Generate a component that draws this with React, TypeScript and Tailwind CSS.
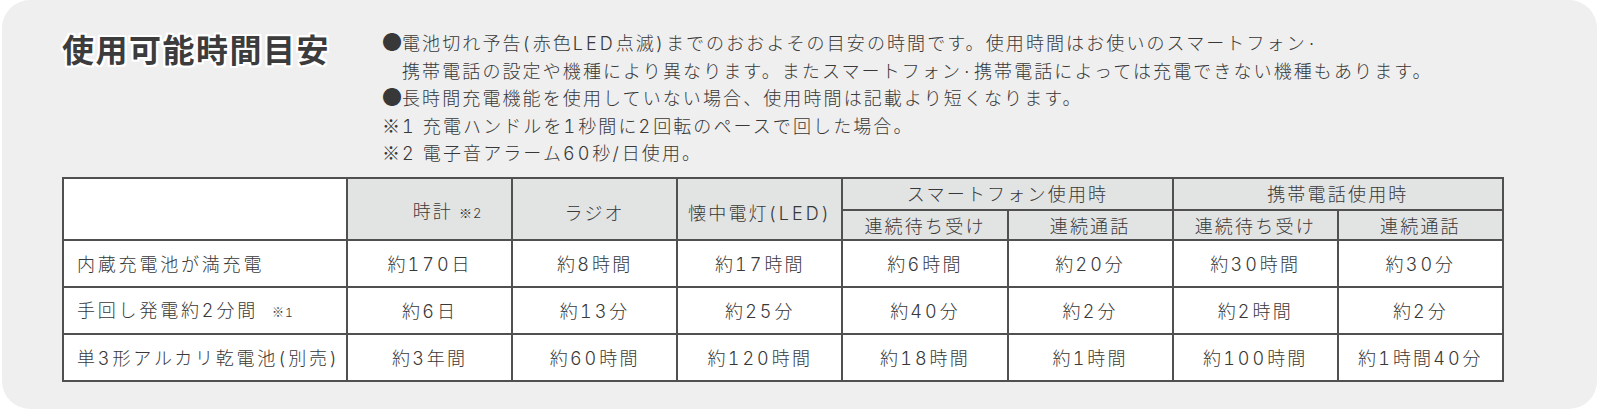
import React from 'react';

const cols = ['時計', 'ラジオ', '懐中電灯(LED)'];

const rows = [
  { label: '内蔵充電池が満充電', values: ['約170日', '約8時間', '約17時間', '約6時間', '約20分', '約30時間', '約30分'] },
  { label: '手回し発電約2分間', note: '※1', values: ['約6日', '約13分', '約25分', '約40分', '約2分', '約2時間', '約2分'] },
  { label: '単3形アルカリ乾電池(別売)', values: ['約3年間', '約60時間', '約120時間', '約18時間', '約1時間', '約100時間', '約1時間40分'] },
];

const cell = 'border-2 border-[#505050] leading-[24px]';

// latin / digit runs get a wider face and extra spacing, like the print original
function T({ s }: { s: string }) {
  const parts = s.split(/([0-9A-Za-z()/]+)/);
  return (
    <>
      {parts.map((p, i) =>
        i % 2 ? (
          <span key={i} className="font-['Inter',sans-serif] font-light tabular-nums leading-none tracking-[3px]">{p}</span>
        ) : (
          p
        )
      )}
    </>
  );
}

function Dot() {
  return <span className="inline-block w-[20px] text-[20px] leading-none tracking-normal">●</span>;
}

export default function App() {
  return (
    <div className="w-[1600px] h-[412px] bg-white pl-[2px] pr-[3px] pb-[3px] font-['Noto_Sans_CJK_JP',sans-serif] font-light text-[#383838]">
      <div className="h-full rounded-[28px] bg-[#efefef] pl-[60px] pt-[29px]">
        <div className="flex">
          <h1 className="w-[320px] mt-[3px] text-[32px] leading-[32px] font-bold tracking-[1.5px] text-[#3c3c3c] [text-shadow:2px_0_0_#fff,-2px_0_0_#fff,0_2px_0_#fff,0_-2px_0_#fff,2px_2px_0_#fff,-2px_-2px_0_#fff,2px_-2px_0_#fff,-2px_2px_0_#fff]">
            使用可能時間目安
          </h1>
          <div className="text-[18px] leading-[27.5px] tracking-[2.1px]">
            <div><Dot /><T s="電池切れ予告(赤色LED点滅)までのおおよその目安の時間です。使用時間はお使いのスマートフォン·" /></div>
            <div className="pl-[20px]">携帯電話の設定や機種により異なります。またスマートフォン·携帯電話によっては充電できない機種もあります。</div>
            <div><Dot />長時間充電機能を使用していない場合、使用時間は記載より短くなります。</div>
            <div>※<T s="1" /> 充電ハンドルを<T s="1" />秒間に<T s="2" />回転のペースで回した場合。</div>
            <div>※<T s="2" /> 電子音アラーム<T s="60" />秒<T s="/" />日使用。</div>
          </div>
        </div>

        <table className="mt-[10px] w-[1442px] table-fixed border-collapse text-[18px] tracking-[2.2px]">
          <colgroup>
            <col className="w-[284px]" />
            <col />
            <col />
            <col />
            <col />
            <col />
            <col />
            <col />
          </colgroup>
          <thead>
            <tr className="h-[32px]">
              <th rowSpan={2} className={`${cell} bg-white`} />
              {cols.map((c, i) => (
                <th key={c} rowSpan={2} className={`${cell} bg-[#e2e3e3] font-light ${i === 0 ? 'pl-[38px] pt-[6px]' : 'pt-[6px]'}`}>
                  <T s={c} />
                  {i === 0 && <span className="ml-[6px] text-[13px] tracking-[1px]">※<T s="2" /></span>}
                </th>
              ))}
              <th colSpan={2} className={`${cell} bg-[#e2e3e3] font-light pb-[2px]`}>スマートフォン使用時</th>
              <th colSpan={2} className={`${cell} bg-[#e2e3e3] font-light pb-[2px]`}>携帯電話使用時</th>
            </tr>
            <tr className="h-[30px]">
              {['連続待ち受け', '連続通話', '連続待ち受け', '連続通話'].map((c, i) => (
                <th key={i} className={`${cell} bg-[#e2e3e3] font-light`}>{c}</th>
              ))}
            </tr>
          </thead>
          <tbody>
            {rows.map(r => (
              <tr key={r.label} className="h-[47px] bg-white">
                <td className={`${cell} pl-[13px] text-left tracking-[2.8px]`}>
                  <T s={r.label} />
                  {r.note && <span className="ml-[14px] text-[12px] tracking-[1px]">※<T s="1" /></span>}
                </td>
                {r.values.map((v, i) => (
                  <td key={i} className={`${cell} text-center`}><T s={v} /></td>
                ))}
              </tr>
            ))}
          </tbody>
        </table>
      </div>
    </div>
  );
}
